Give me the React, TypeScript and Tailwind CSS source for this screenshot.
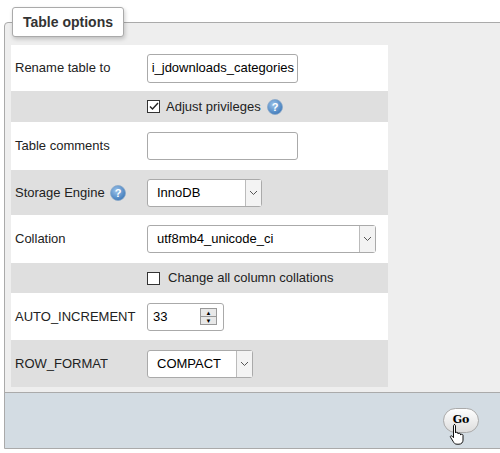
const Help = () => (
  <svg width="16" height="16" viewBox="0 0 16 16" className="inline-block">
    <defs>
      <radialGradient id="hg" cx="0.4" cy="0.35" r="0.7">
        <stop offset="0" stopColor="#9cc3ea" />
        <stop offset="1" stopColor="#3b77b8" />
      </radialGradient>
    </defs>
    <circle cx="8" cy="8" r="7.5" fill="url(#hg)" stroke="#8aa8c8" strokeWidth="0.8" />
    <text x="8" y="12" textAnchor="middle" fontSize="11" fontWeight="bold" fill="#fff" fontFamily="Liberation Sans, sans-serif">?</text>
  </svg>
);

const Chevron = () => (
  <svg width="9" height="6" viewBox="0 0 9 6"><path d="M1 1l3.5 3.5L8 1" fill="none" stroke="#555" strokeWidth="1" /></svg>
);

function Select({ value, w }: { value: string; w: string }) {
  return (
    <div className={`flex h-[28px] ${w} rounded-[3px] border border-[#aaa] bg-white`}>
      <div className="flex flex-1 items-center pl-[9px] text-[13px] text-black">{value}</div>
      <div className="flex w-[16px] items-center justify-center border-l border-[#bbb] bg-[#f3f3f3]"><Chevron /></div>
    </div>
  );
}

function Row({ gray, h, label, children }: { gray?: boolean; h: string; label?: React.ReactNode; children: React.ReactNode }) {
  return (
    <div className={`flex items-center ${h} ${gray ? "bg-[#dfdfdf]" : "bg-white"}`}>
      <div className="w-[136px] pl-[4px] text-[13px] text-[#222]">{label}</div>
      <div className="flex items-center">{children}</div>
    </div>
  );
}

export default function App() {
  return (
    <div className="relative h-[453px] w-[500px] overflow-hidden bg-white" style={{ fontFamily: "'Liberation Sans', Arial, sans-serif" }}>
      <div className="absolute left-[4px] top-[22px] w-[520px] rounded-tl-[4px] border border-[#aaa] bg-[#eee]">
        <div className="ml-[6px] mt-[22px] w-[377px] pb-[5px]">
          <Row h="h-[46px]" label="Rename table to">
            <div className="flex h-[29px] w-[151px] items-center justify-end overflow-hidden whitespace-nowrap rounded-[3px] border border-[#aaa] bg-white pr-[3px] text-[13px] text-black">i_jdownloads_categories</div>
          </Row>
          <Row gray h="h-[31px]">
            <div className="flex items-center gap-[6px] text-[13px] text-[#222]">
              <div className="flex h-[13px] w-[13px] items-center justify-center border border-[#333] bg-white">
                <svg width="10" height="9" viewBox="0 0 10 9"><path d="M1 4.5l2.5 2.5L9 1" fill="none" stroke="#222" strokeWidth="1.4" /></svg>
              </div>
              <span>Adjust privileges</span>
              <Help />
            </div>
          </Row>
          <Row h="h-[48px]" label="Table comments">
            <div className="h-[28px] w-[151px] rounded-[3px] border border-[#aaa] bg-white" />
          </Row>
          <Row gray h="h-[45px]" label={<span className="flex items-center gap-[5px]">Storage Engine <Help /></span>}>
            <Select value="InnoDB" w="w-[115px]" />
          </Row>
          <Row h="h-[48px]" label="Collation">
            <Select value="utf8mb4_unicode_ci" w="w-[229px]" />
          </Row>
          <Row gray h="h-[30px]">
            <div className="flex items-center gap-[8px] text-[13px] text-[#222]">
              <div className="h-[13px] w-[13px] border border-[#333] bg-white" />
              <span>Change all column collations</span>
            </div>
          </Row>
          <Row h="h-[47px]" label="AUTO_INCREMENT">
            <div className="flex h-[28px] w-[77px] items-center justify-between rounded-[3px] border border-[#aaa] bg-white pl-[5px] pr-[6px] text-[13px] text-black">
              <span>33</span>
              <div className="flex h-[17px] w-[17px] flex-col border border-[#999] bg-[#e8e8e8]">
                <div className="flex flex-1 items-center justify-center border-b border-[#999] text-[6px] leading-none">▲</div>
                <div className="flex flex-1 items-center justify-center text-[6px] leading-none">▼</div>
              </div>
            </div>
          </Row>
          <Row gray h="h-[47px]" label="ROW_FORMAT">
            <Select value="COMPACT" w="w-[106px]" />
          </Row>
        </div>
        <div className="flex h-[56px] items-center justify-end border-t border-[#aaa] bg-[#d3dce3] pr-[44px]">
          <div className="relative flex h-[25px] w-[36px] items-center justify-center rounded-full border border-[#aaa] bg-gradient-to-b from-white to-[#ddd] text-[11px] font-bold text-black" style={{ fontFamily: "'DejaVu Serif', serif" }}>
            Go
            <svg className="absolute left-[5px] top-[14px]" width="18" height="22" viewBox="0 0 18 22">
              <path d="M5 1.5c1 0 1.5.6 1.5 1.5v7c0-1 2.5-1 2.5 0v1c0-1 2.5-1 2.5 0v1c0-1 2.5-1 2.5.2v5c0 2-1.5 4-4 4H8c-2 0-3-1-4-3l-2.5-4c-.6-1 .6-2 1.6-1l1.4 1.5V3c0-.9.5-1.5 1.5-1.5z" fill="#fff" stroke="#111" strokeWidth="1" />
            </svg>
          </div>
        </div>
      </div>
      <div className="absolute left-[12px] top-[7px] flex h-[30px] w-[112px] items-center justify-center rounded-[3px] border border-[#aaa] bg-white text-[14px] font-bold text-[#333] shadow-[1px_2px_4px_rgba(0,0,0,0.2)]">
        Table options
      </div>
    </div>
  );
}
